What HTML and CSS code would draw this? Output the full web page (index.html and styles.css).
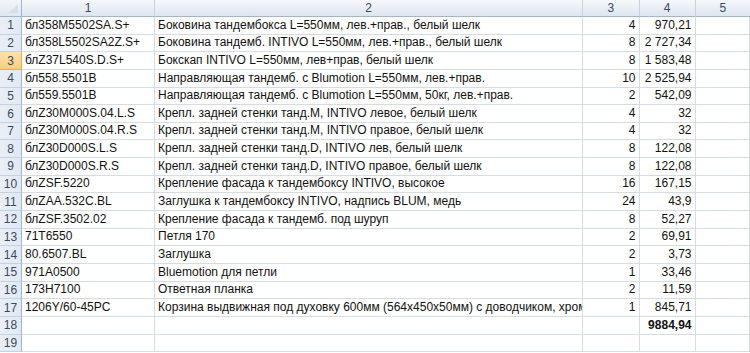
FILE: index.html
```html
<!DOCTYPE html>
<html lang="ru">
<head>
<meta charset="utf-8">
<title>Sheet</title>
<link rel="stylesheet" href="styles.css">
</head>
<body>
<div class="sheet">
  <div class="corner"><span class="tri"></span></div>
  <div class="ch">1</div><div class="ch">2</div><div class="ch">3</div><div class="ch">4</div><div class="ch last">5</div>

  <div class="rh">1</div><div class="c">бл358M5502SA.S+</div><div class="c">Боковина тандембокса L=550мм, лев.+прав., белый шелк</div><div class="c n">4</div><div class="c n">970,21</div><div class="c"></div>
  <div class="rh">2</div><div class="c">бл358L5502SA2Z.S+</div><div class="c">Боковина тандемб. INTIVO L=550мм, лев.+прав., белый шелк</div><div class="c n">8</div><div class="c n">2 727,34</div><div class="c"></div>
  <div class="rh sel">3</div><div class="c">блZ37L540S.D.S+</div><div class="c">Бокскап INTIVO L=550мм, лев+прав, белый шелк</div><div class="c n">8</div><div class="c n">1 583,48</div><div class="c"></div>
  <div class="rh">4</div><div class="c">бл558.5501B</div><div class="c">Направляющая тандемб. с Blumotion L=550мм, лев.+прав.</div><div class="c n">10</div><div class="c n">2 525,94</div><div class="c"></div>
  <div class="rh">5</div><div class="c">бл559.5501B</div><div class="c">Направляющая тандемб. с Blumotion L=550мм, 50кг, лев.+прав.</div><div class="c n">2</div><div class="c n">542,09</div><div class="c"></div>
  <div class="rh">6</div><div class="c">блZ30M000S.04.L.S</div><div class="c">Крепл. задней стенки танд.M, INTIVO левое, белый шелк</div><div class="c n">4</div><div class="c n">32</div><div class="c"></div>
  <div class="rh">7</div><div class="c">блZ30M000S.04.R.S</div><div class="c">Крепл. задней стенки танд.M, INTIVO правое, белый шелк</div><div class="c n">4</div><div class="c n">32</div><div class="c"></div>
  <div class="rh">8</div><div class="c">блZ30D000S.L.S</div><div class="c">Крепл. задней стенки танд.D, INTIVO лев, белый шелк</div><div class="c n">8</div><div class="c n">122,08</div><div class="c"></div>
  <div class="rh">9</div><div class="c">блZ30D000S.R.S</div><div class="c">Крепл. задней стенки танд.D, INTIVO правое, белый шелк</div><div class="c n">8</div><div class="c n">122,08</div><div class="c"></div>
  <div class="rh">10</div><div class="c">блZSF.5220</div><div class="c">Крепление фасада к тандембоксу INTIVO, высокое</div><div class="c n">16</div><div class="c n">167,15</div><div class="c"></div>
  <div class="rh">11</div><div class="c">блZAA.532C.BL</div><div class="c">Заглушка к тандембоксу INTIVO, надпись BLUM, медь</div><div class="c n">24</div><div class="c n">43,9</div><div class="c"></div>
  <div class="rh">12</div><div class="c">блZSF.3502.02</div><div class="c">Крепление фасада к тандемб. под шуруп</div><div class="c n">8</div><div class="c n">52,27</div><div class="c"></div>
  <div class="rh">13</div><div class="c">71T6550</div><div class="c">Петля 170</div><div class="c n">2</div><div class="c n">69,91</div><div class="c"></div>
  <div class="rh">14</div><div class="c">80.6507.BL</div><div class="c">Заглушка</div><div class="c n">2</div><div class="c n">3,73</div><div class="c"></div>
  <div class="rh">15</div><div class="c">971A0500</div><div class="c">Bluemotion для петли</div><div class="c n">1</div><div class="c n">33,46</div><div class="c"></div>
  <div class="rh">16</div><div class="c">173H7100</div><div class="c">Ответная планка</div><div class="c n">2</div><div class="c n">11,59</div><div class="c"></div>
  <div class="rh">17</div><div class="c">1206Y/60-45PC</div><div class="c">Корзина выдвижная под духовку 600мм (564x450x50мм) с доводчиком, хром</div><div class="c n">1</div><div class="c n">845,71</div><div class="c"></div>
  <div class="rh">18</div><div class="c"></div><div class="c"></div><div class="c"></div><div class="c n b">9884,94</div><div class="c"></div>
  <div class="rh">19</div><div class="c"></div><div class="c"></div><div class="c"></div><div class="c"></div><div class="c"></div>
</div>
</body>
</html>
```
FILE: styles.css
```css
html, body {
  margin: 0;
  padding: 0;
  background: #ffffff;
  overflow: hidden;
}
.sheet {
  display: grid;
  grid-template-columns: 22px 133px 428px 56.5px 56px 1fr;
  grid-template-rows: 17px repeat(19, 17.65px);
  width: 750px;
  font-family: "Liberation Sans", Arial, sans-serif;
  font-size: 12px;
  color: #111111;
}
.corner {
  position: relative;
  background: linear-gradient(#f3f6fa, #dfe6ef);
  border-right: 1px solid #9eb6ce;
  border-bottom: 1px solid #9eb6ce;
}
.tri {
  position: absolute;
  right: 3px;
  bottom: 3px;
  width: 0;
  height: 0;
  border-left: 9px solid transparent;
  border-bottom: 9px solid #d9dee5;
}
.ch {
  display: flex;
  align-items: center;
  justify-content: center;
  background: linear-gradient(#f6f8fb, #dde5ee);
  border-right: 1px solid #c5d2e0;
  border-bottom: 1px solid #9eb6ce;
  color: #3a4a5e;
  font-size: 12px;
}
.ch.last { border-right: none; }
.rh {
  display: flex;
  align-items: center;
  justify-content: center;
  background: linear-gradient(90deg, #eaeff6, #e2e9f3);
  border-right: 1px solid #9eb6ce;
  border-bottom: 1px solid #c5d2e0;
  color: #3a4a5e;
  font-size: 12px;
}
.rh.sel {
  background: linear-gradient(#fbe3ad, #f7cf83);
  border-bottom-color: #f2a94e;
  border-right-color: #f2a94e;
}
.c {
  display: flex;
  align-items: flex-end;
  padding: 0 3px 2px 3px;
  border-right: 1px solid #d6dce5;
  border-bottom: 1px solid #d6dce5;
  white-space: nowrap;
  overflow: hidden;
  min-width: 0;
  line-height: 14px;
}
.n { justify-content: flex-end; }
.b { font-weight: bold; }
```
